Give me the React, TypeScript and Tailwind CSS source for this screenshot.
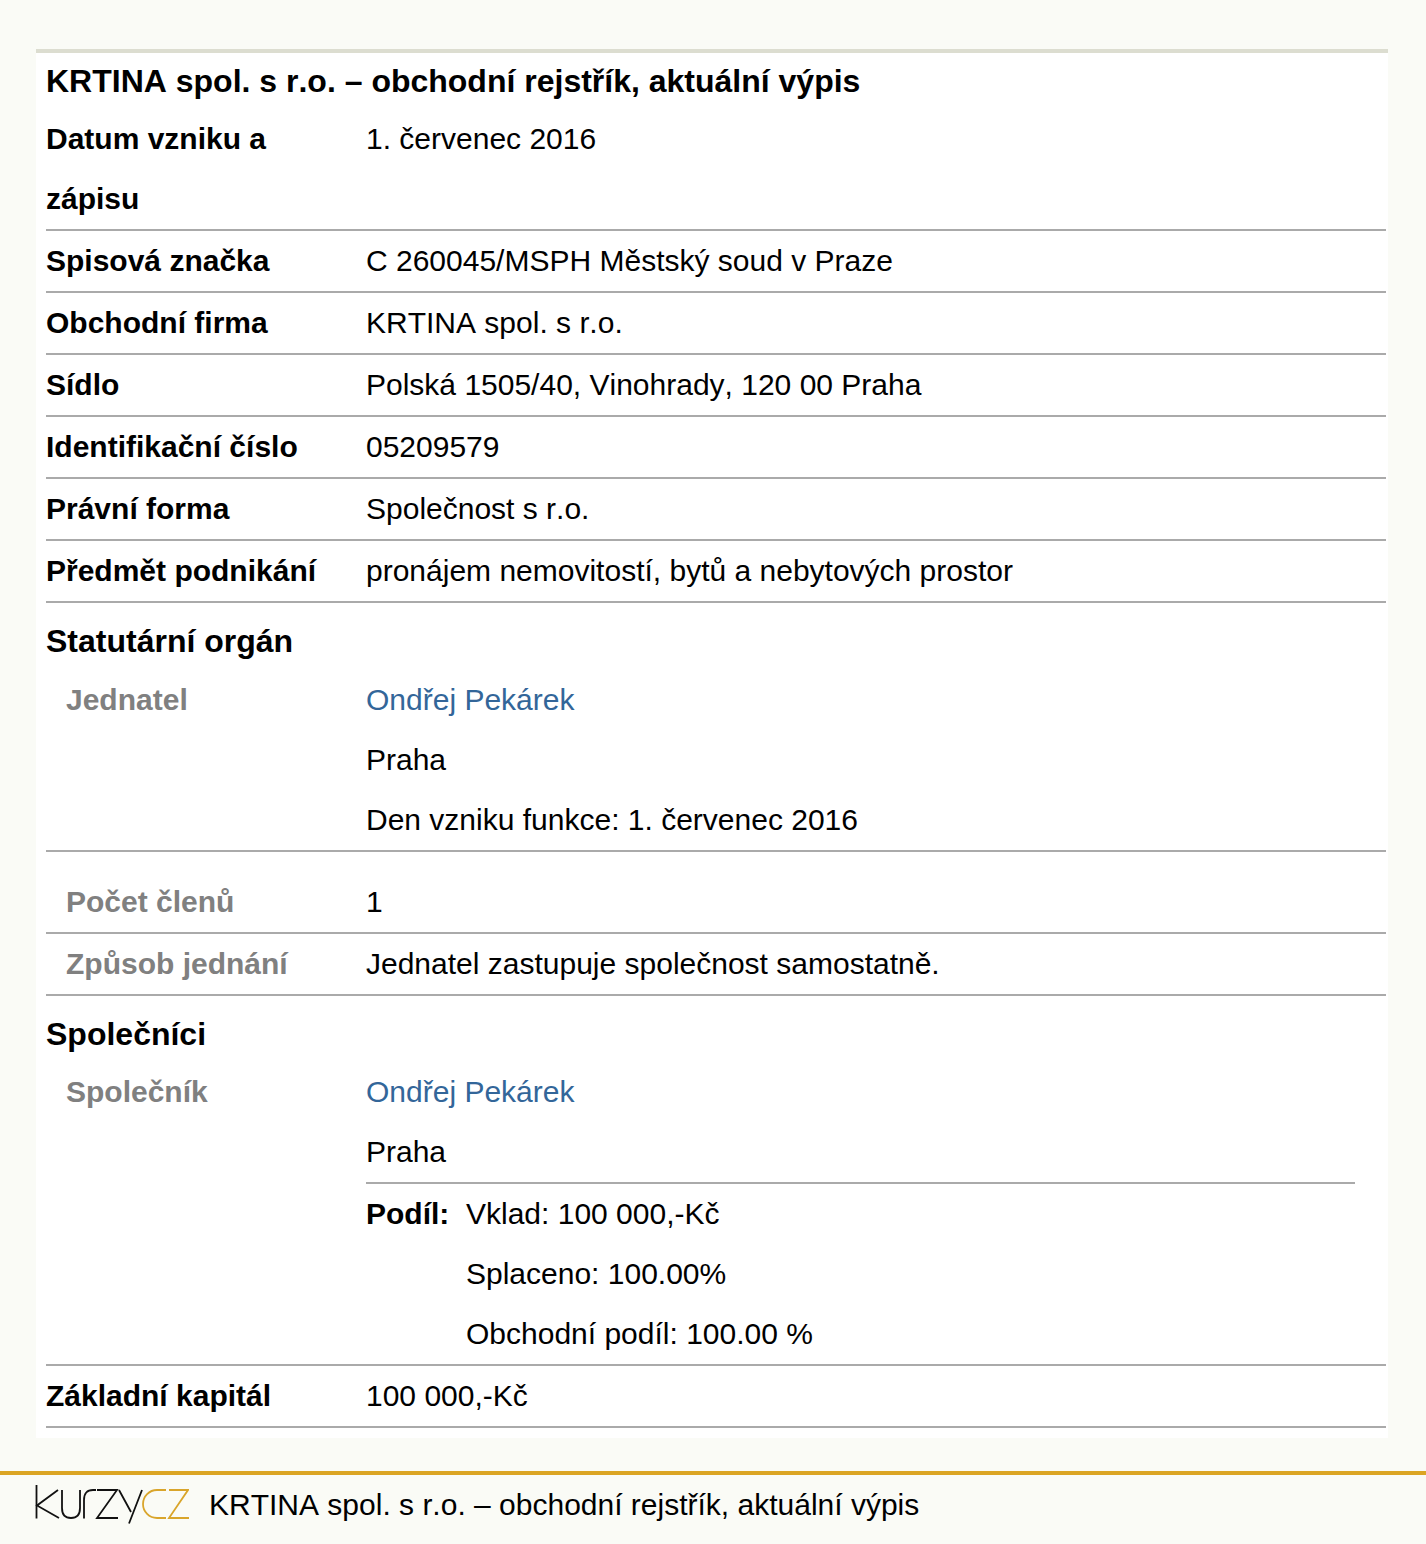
function Row({ label, children, sub = false }: { label: string; children: React.ReactNode; sub?: boolean }) {
  return (
    <div className="flex border-b-2 border-[#aaaaaa]">
      <div className={`w-[320px] shrink-0 font-bold ${sub ? "pl-5 text-[#808080]" : "text-black"}`}>{label}</div>
      <div className="flex-1 pr-[31px]">{children}</div>
    </div>
  );
}

function Logo() {
  return (
    <svg width="154" height="40" viewBox="0 0 154 40" fill="none" strokeWidth="1.8" className="block shrink-0">
      <g stroke="#111111">
        <path d="M1.5 0V33.5" />
        <path d="M23 5L2 20.5L24 33" />
        <path d="M27 5V23Q27 33 36 33Q45 33 45 23V5" />
        <path d="M49 33.5V15Q49 5 58 5H61" />
        <path d="M62 5H82L62 33H83" />
        <path d="M84 5L96 27M107 5L94 38.5" />
      </g>
      <g stroke="#d9a52b">
        <path d="M131 5H122A14 14 0 0 0 122 33H131" />
        <path d="M134 5H153L134 33H154" />
      </g>
    </svg>
  );
}

export default function App() {
  return (
    <div className="min-h-[1544px] bg-[#fafbf6] text-[30px] leading-[60px] text-black font-['Liberation_Sans',Arial,sans-serif] [font-kerning:none]">
      <div className="pt-[49px] pl-[36px] pr-[38px]">
        <div className="border-t-4 border-[#dcddd0] bg-white pl-[10px] pr-[2px] pb-[10px]">
          <h1 className="font-bold text-[32px] leading-[56px]">KRTINA spol. s r.o. – obchodní rejstřík, aktuální výpis</h1>
          <Row label="Datum vzniku a zápisu">1. červenec 2016</Row>
          <Row label="Spisová značka">C 260045/MSPH Městský soud v Praze</Row>
          <Row label="Obchodní firma">KRTINA spol. s r.o.</Row>
          <Row label="Sídlo">Polská 1505/40, Vinohrady, 120 00 Praha</Row>
          <Row label="Identifikační číslo">05209579</Row>
          <Row label="Právní forma">Společnost s r.o.</Row>
          <Row label="Předmět podnikání">pronájem nemovitostí, bytů a nebytových prostor</Row>
          <h2 className="font-bold text-[32px] leading-[76px] h-[67px]">Statutární orgán</h2>
          <Row label="Jednatel" sub>
            <a className="block text-[#336699]">Ondřej Pekárek</a>
            <div>Praha</div>
            <div>Den vzniku funkce: 1. červenec 2016</div>
          </Row>
          <div className="pt-5"><Row label="Počet členů" sub>1</Row></div>
          <Row label="Způsob jednání" sub>Jednatel zastupuje společnost samostatně.</Row>
          <h2 className="font-bold text-[32px] leading-[76px] h-[66px]">Společníci</h2>
          <Row label="Společník" sub>
            <a className="block text-[#336699]">Ondřej Pekárek</a>
            <div>Praha</div>
            <div className="flex border-t-2 border-[#aaaaaa]">
              <b className="w-[100px] shrink-0">Podíl:</b>
              <div>
                <div>Vklad: 100 000,-Kč</div>
                <div>Splaceno: 100.00%</div>
                <div>Obchodní podíl: 100.00 %</div>
              </div>
            </div>
          </Row>
          <Row label="Základní kapitál">100 000,-Kč</Row>
        </div>
      </div>
      <footer className="mt-[33px] border-t-4 border-[#dba523] flex items-center h-[64px] pl-[35px] gap-[20px]">
        <Logo />
        <span>KRTINA spol. s r.o. – obchodní rejstřík, aktuální výpis</span>
      </footer>
    </div>
  );
}
